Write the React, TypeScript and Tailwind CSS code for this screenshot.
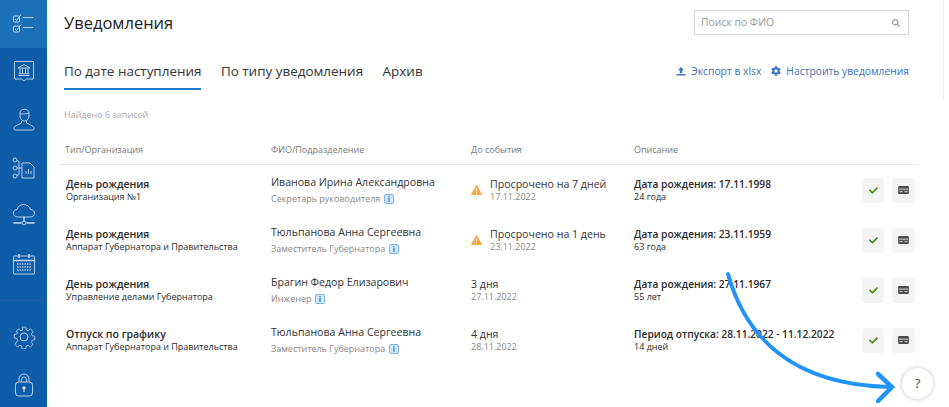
import type { ReactNode } from "react";
import { FaCheck, FaCog, FaSearch } from "react-icons/fa";

const rows = [
  {
    type: "День рождения",
    org: "Организация №1",
    name: "Иванова Ирина Александровна",
    role: "Секретарь руководителя",
    event: "Просрочено на 7 дней",
    date: "17.11.2022",
    late: true,
    desc: "Дата рождения: 17.11.1998",
    sub: "24 года",
  },
  {
    type: "День рождения",
    org: "Аппарат Губернатора и Правительства",
    name: "Тюльпанова Анна Сергеевна",
    role: "Заместитель Губернатора",
    event: "Просрочено на 1 день",
    date: "23.11.2022",
    late: true,
    desc: "Дата рождения: 23.11.1959",
    sub: "63 года",
  },
  {
    type: "День рождения",
    org: "Управление делами Губернатора",
    name: "Брагин Федор Елизарович",
    role: "Инженер",
    event: "3 дня",
    date: "27.11.2022",
    late: false,
    desc: "Дата рождения: 27.11.1967",
    sub: "55 лет",
  },
  {
    type: "Отпуск по графику",
    org: "Аппарат Губернатора и Правительства",
    name: "Тюльпанова Анна Сергеевна",
    role: "Заместитель Губернатора",
    event: "4 дня",
    date: "28.11.2022",
    late: false,
    desc: "Период отпуска: 28.11.2022 - 11.12.2022",
    sub: "14 дней",
  },
];

function NavIcon({ children, active }: { children: ReactNode; active?: boolean }) {
  return (
    <div className={`flex h-[48px] shrink-0 items-center justify-center ${active ? "bg-[#1b70b8]" : ""}`}>
      <svg
        viewBox="0 0 24 24"
        className="size-6 text-[#c3d9ef]"
        fill="none"
        stroke="currentColor"
        strokeWidth="0.9"
      >
        {children}
      </svg>
    </div>
  );
}

function InfoIcon() {
  return (
    <svg viewBox="0 0 10 10" className="size-[10px] shrink-0">
      <rect x="0.5" y="0.5" width="9" height="9" rx="1.5" fill="#d4e6fa" stroke="#7db4ee" />
      <rect x="4.2" y="2" width="1.6" height="1.4" fill="#4a8fd8" />
      <rect x="4.2" y="4" width="1.6" height="3.8" fill="#4a8fd8" />
    </svg>
  );
}

function CardIcon() {
  return (
    <svg viewBox="0 0 12 9" className="h-[8px] w-[11px]">
      <rect width="12" height="9" rx="1" fill="#4a4a4a" />
      <rect x="1" y="3" width="10" height="1" fill="#eee" />
      <rect x="1.5" y="5.5" width="3.5" height="1.5" fill="#bbb" />
      <rect x="7" y="5.5" width="3.5" height="1.5" fill="#bbb" />
    </svg>
  );
}

export default function App() {
  return (
    <div className="relative flex h-[407px] w-[949px] overflow-hidden bg-white font-['Open_Sans',sans-serif]">
      <aside className="flex w-[47px] shrink-0 flex-col bg-[#0f5ca9]">
        <NavIcon active>
          <rect x="1.5" y="4" width="6" height="6" rx="1" />
          <rect x="1.5" y="14" width="6" height="6" rx="1" />
          <path d="M3 7l1.5 1.5L9 2.5M3 17l1.5 1.5L9 12.5M11 5.5h10M11 15.5h10" />
        </NavIcon>
        <NavIcon>
          <path d="M2.5 1.500h19v17.500h-7l-2.500 2-2.500-2h-7z" />
          <path d="M6 8l6-3.500L18 8zM6.500 15.500h11M6.500 13.800h11M8 8.500v5M10.500 8.500v5M13.500 8.500v5M16 8.500v5" />
        </NavIcon>
        <NavIcon>
          <path d="M8 5c0-5 9-5 9 0v3c0 3-2 5-4.500 5S8 11 8 8z" />
          <path d="M8 6c3 0 6 0 9-1M9.500 13v2L3.500 18c-2 1-2 4 0 4h17c2 0 2-3 0-4l-6-3v-2" />
        </NavIcon>
        <NavIcon>
          <circle cx="3" cy="4" r="2" />
          <circle cx="3" cy="12" r="2" />
          <circle cx="3" cy="20" r="2" />
          <path d="M5 12h5M7 12V5.500L5 4.500M7 12v6.500L5 19.500M10 7h8l4 4v11H10zM14 18v-3M16.500 18v-5M19 18v-3" />
        </NavIcon>
        <NavIcon>
          <g transform="translate(0 -2)">
            <path d="M6 15c-6 0-6-7-1-7.500C6 1 17 1 18.500 7.500 24 8 24 15 18 15z" />
            <path d="M12 15v4M1.500 21h8M14.500 21h8" strokeWidth="1.500" />
            <circle cx="12" cy="21" r="2" />
          </g>
        </NavIcon>
        <NavIcon>
          <rect x="1.500" y="4" width="21" height="18" rx="0.500" />
          <path d="M1.500 8.500h21M7 2v4M17 2v4" strokeWidth="1.500" />
          <path d="M5 12h14M5 15h14M5 18h14" strokeWidth="1.500" strokeDasharray="1.400 1.100" />
        </NavIcon>
        <div className="mt-[12px] shrink-0 border-t border-[#1d5f9f] pt-[12px]">
          <NavIcon>
            <circle cx="12" cy="12" r="4" />
            <path d="M10 1h4l.6 3.200 2 .9L19.400 3l2.700 3-1.900 2.600.8 2 3 .5v4l-3 .6-.8 2 1.700 2.600-2.800 2.800-2.600-1.800-2 .8-.6 3h-4l-.6-3-2-.8-2.600 1.800-2.800-2.800L5 15.700l-.8-2-3-.6v-4l3-.5.8-2L3.100 6l2.700-3 2.800 2.100 2-.9z" transform="translate(1.200 1.200) scale(0.9)" />
          </NavIcon>
        </div>
        <NavIcon>
          <rect x="3.500" y="9" width="17" height="14" rx="3" />
          <path d="M7 9V6a5 5 0 0 1 10 0v3M9.500 9V6.500a2.500 2.500 0 0 1 5 0V9" />
          <circle cx="12" cy="15" r="1.300" fill="currentColor" />
          <path d="M12 15v4" strokeWidth="1.300" />
        </NavIcon>
      </aside>

      <main className="min-w-0 flex-1 pl-[12px] pr-[30px]">
        <div className="flex items-start justify-between pl-[5px] pr-[10px] pt-[10px]">
          <h1 className="mt-[1px] text-[16.500px] leading-[24px] text-[#222]">Уведомления</h1>
          <div className="flex h-[25px] w-[215px] items-center justify-between border border-[#d6d6d6] pl-[6px] pr-[8px] text-[10.400px] text-[#9a9a9a]">
            <span>Поиск по ФИО</span>
            <FaSearch className="size-[8px] text-[#a0a0a0]" />
          </div>
        </div>

        <div className="mt-[24px] flex items-start justify-between pl-[5px] pr-[10px]">
          <nav className="flex gap-[19.500px] text-[13.450px] leading-[24px] text-[#333]">
            <span className="h-[31px] border-b-2 border-[#1f7bc9]">По дате наступления</span>
            <span>По типу уведомления</span>
            <span>Архив</span>
          </nav>
          <div className="mt-[3px] flex items-center gap-[10px] text-[10.300px] leading-[18px] text-[#3c6fb4]">
            <span className="flex items-center gap-[5px]">
              <svg viewBox="0 0 10 10" className="size-[10px] fill-[#3f78c4]">
                <path d="M5 1l3.200 3.300H6.200v3H3.800v-3H1.800zM.5 8h9v1.500h-9z" />
              </svg>
              Экспорт в xlsx
            </span>
            <span className="flex items-center gap-[5px]">
              <FaCog className="size-[10px] text-[#3f78c4]" />
              Настроить уведомления
            </span>
          </div>
        </div>

        <p className="mt-[18px] pl-[5px] text-[9px] leading-[14px] text-[#aaa]">Найдено 6 записей</p>

        <div className="mt-[19px] grid h-[24px] grid-cols-[206px_200px_163px_1fr] border-b border-[#e8e8e8] pl-[6px] text-[9px] leading-[18px] text-[#777]">
          <span>Тип/Организация</span>
          <span>ФИО/Подразделение</span>
          <span>До события</span>
          <span>Описание</span>
        </div>

        {rows.map((row) => (
          <div
            key={row.type + row.name}
            className="grid h-[50px] grid-cols-[205px_200px_163px_228px_1fr] items-center pl-[7px]"
          >
            <div className="text-[#2a2a2a]">
              <div className="text-[10.500px] font-semibold leading-[14px]">{row.type}</div>
              <div className="text-[9px] leading-[12px]">{row.org}</div>
            </div>
            <div>
              <div className="text-[10.600px] leading-[14px] text-[#333]">{row.name}</div>
              <div className="mt-[3px] flex items-center gap-[4px] text-[9px] leading-[14px] text-[#888]">
                {row.role}
                <InfoIcon />
              </div>
            </div>
            <div className="flex items-center gap-[8px]">
              {row.late && (
                <svg viewBox="0 0 12 11" className="h-[10px] w-[11px] shrink-0">
                  <path d="M6 .5l5.500 10H.5z" fill="#f6a541" stroke="#f6a541" strokeLinejoin="round" />
                  <path d="M5.400 3.500h1.200v3.500H5.400zM5.400 7.800h1.200v1.300H5.400z" fill="#fff" />
                </svg>
              )}
              <div>
                <div className="text-[10.600px] leading-[14px] text-[#333]">{row.event}</div>
                <div className="text-[9px] leading-[12px] text-[#888]">{row.date}</div>
              </div>
            </div>
            <div className="text-[#2a2a2a]">
              <div className="text-[10.200px] font-semibold leading-[14px]">{row.desc}</div>
              <div className="text-[9px] leading-[12px]">{row.sub}</div>
            </div>
            <div className="flex gap-[8px]">
              <button className="flex h-[25px] w-[22px] items-center justify-center rounded-[3px] bg-[#f4f4f4]">
                <FaCheck className="size-[9px] text-[#558f22]" />
              </button>
              <button className="flex h-[25px] w-[23px] items-center justify-center rounded-[3px] bg-[#f4f4f4]">
                <CardIcon />
              </button>
            </div>
          </div>
        ))}
      </main>

      <div className="absolute right-[5px] top-0 h-[100px] w-px bg-[#eee]" />

      {/* стрелка-подсказка поверх таблицы */}
      <svg className="pointer-events-none absolute inset-0 size-full" fill="none" stroke="#2094fb" strokeWidth="4" strokeLinecap="round">
        <path d="M728 274C745 335 790 385 891 387" />
        <path d="M878 374l14 13-14 14" strokeWidth="4.500" />
      </svg>

      <button className="absolute left-[902px] top-[368px] flex size-[31px] items-center justify-center rounded-full bg-white text-[13px] text-[#444] shadow-[0_0_4px_rgba(0,0,0,0.25)]">
        ?
      </button>
    </div>
  );
}
